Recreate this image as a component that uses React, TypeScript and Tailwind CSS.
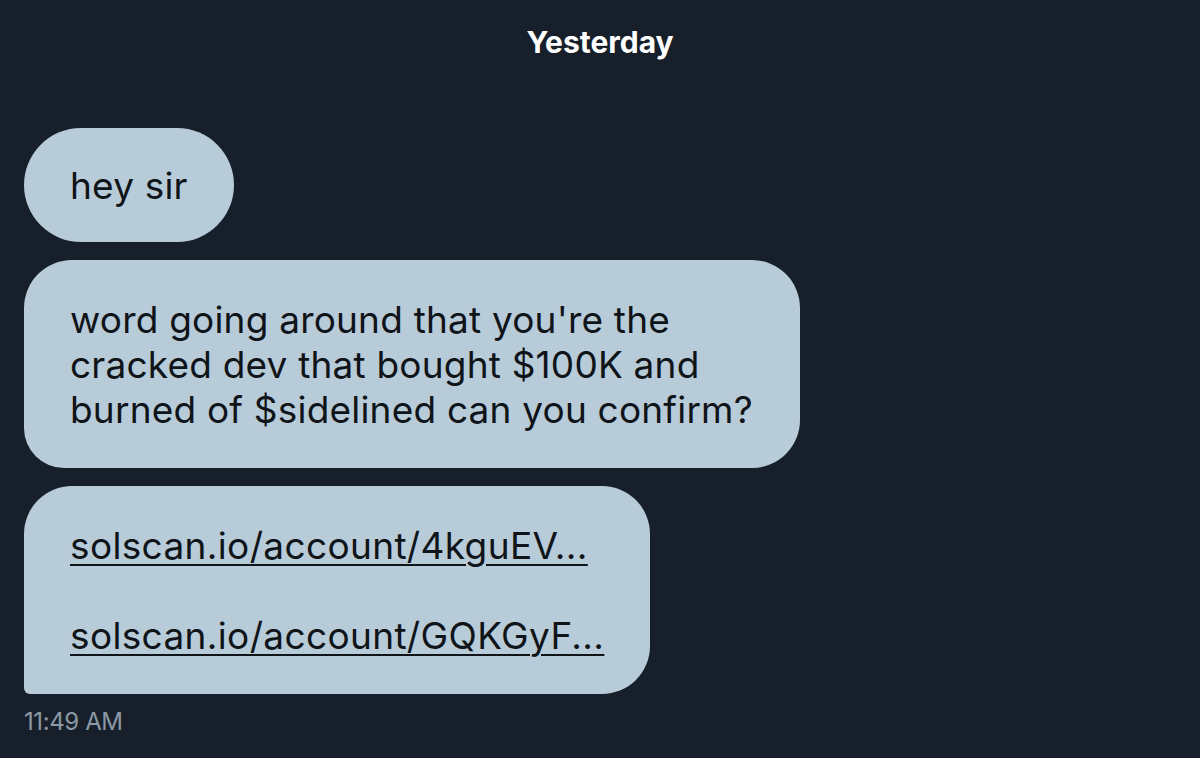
export default function App() {
  return (
    <div
      className="w-[1200px] h-[758px] bg-[#17202a] text-[#0f1419] flex flex-col overflow-hidden"
      style={{ fontFamily: 'Inter, "Noto Sans", sans-serif' }}
    >
      <div className="h-[84px] flex items-center justify-center">
        <span className="text-white font-bold text-[30px]">Yesterday</span>
      </div>

      <div className="flex flex-col items-start gap-[18px] px-6 pt-[44px] tracking-[0.2px]">
        <div className="bg-[#b8cbd8] rounded-[57px] h-[114px] px-[46px] flex items-center">
          <span className="text-[37px] leading-[45px]">hey sir</span>
        </div>

        <div className="bg-[#b8cbd8] rounded-[48px] rounded-bl-[40px] w-[776px] h-[208px] px-[46px] flex items-center">
          <p className="text-[37px] leading-[45px]">
            word going around that you're the
            <br />
            cracked dev that bought $100K and
            <br />
            burned of $sidelined can you confirm?
          </p>
        </div>

        <div className="bg-[#b8cbd8] rounded-[48px] rounded-bl-[6px] w-[626px] h-[208px] px-[46px] flex flex-col justify-center tracking-[0.35px]">
          <a className="text-[37px] leading-[45px] underline underline-offset-[5px] decoration-[2px]">
            solscan.io/account/4kguEV...
          </a>
          <div className="h-[45px]" />
          <a className="text-[37px] leading-[45px] underline underline-offset-[5px] decoration-[2px]">
            solscan.io/account/GQKGyF...
          </a>
        </div>
      </div>

      <div className="px-6 pt-[10px] text-[#8b98a5] text-[24px] tracking-[-0.4px]">11:49 AM</div>
    </div>
  );
}
